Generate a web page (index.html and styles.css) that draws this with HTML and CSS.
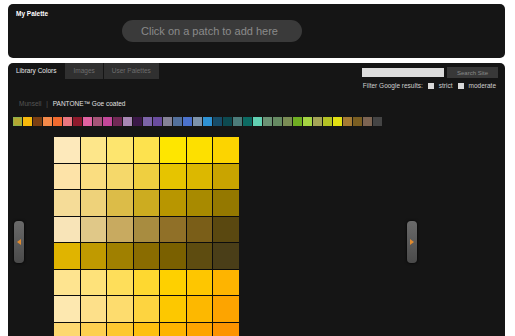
FILE: index.html
```html
<!DOCTYPE html>
<html lang="en">
<head>
    <meta charset="UTF-8">
    <title>Color Library</title>
    <link rel="stylesheet" href="styles.css">
</head>
<body>
    <!-- My palette -->
    <div class="palette-bar">
        <div class="palette-title">My Palette</div>
        <div class="palette-drop">Click on a patch to add here</div>
    </div>

    <!-- Library -->
    <div class="library">
        <div class="library-head">
            <div class="tabs">
                <span class="tab active">Library Colors</span>
                <span class="tab">Images</span>
                <span class="tab">User Palettes</span>
            </div>
            <div class="search">
                <input class="search-input" type="text">
                <button class="search-btn">Search Site</button>
            </div>
        </div>

        <div class="filter">
            <span>Filter Google results:</span>
            <span class="check"></span>
            <span>strict</span>
            <span class="check"></span>
            <span>moderate</span>
        </div>

        <div class="sources">
            <span class="source">Munsell</span>
            <span class="sep">|</span>
            <span class="source active">PANTONE™ Goe coated</span>
        </div>

        <div class="families">
            <span class="family selected" style="background:#b3a732"></span>
            <span class="family" style="background:#f7b90c"></span>
            <span class="family" style="background:#7b3f14"></span>
            <span class="family" style="background:#f58a4a"></span>
            <span class="family" style="background:#f26b2f"></span>
            <span class="family" style="background:#ea7680"></span>
            <span class="family" style="background:#8e1a2c"></span>
            <span class="family" style="background:#e263a3"></span>
            <span class="family" style="background:#a65478"></span>
            <span class="family" style="background:#c4489a"></span>
            <span class="family" style="background:#712955"></span>
            <span class="family" style="background:#a888b4"></span>
            <span class="family" style="background:#3b1848"></span>
            <span class="family" style="background:#7c64a8"></span>
            <span class="family" style="background:#6a4c9e"></span>
            <span class="family" style="background:#858296"></span>
            <span class="family" style="background:#53709c"></span>
            <span class="family" style="background:#4b72cc"></span>
            <span class="family" style="background:#7d93aa"></span>
            <span class="family" style="background:#2e92d4"></span>
            <span class="family" style="background:#174c68"></span>
            <span class="family" style="background:#0d4a50"></span>
            <span class="family" style="background:#4c7c7a"></span>
            <span class="family" style="background:#0c6a62"></span>
            <span class="family" style="background:#62d0b2"></span>
            <span class="family" style="background:#6b9274"></span>
            <span class="family" style="background:#668a62"></span>
            <span class="family" style="background:#7a8c54"></span>
            <span class="family" style="background:#6fae22"></span>
            <span class="family" style="background:#a4d442"></span>
            <span class="family" style="background:#a4a456"></span>
            <span class="family" style="background:#b4c224"></span>
            <span class="family" style="background:#e2e012"></span>
            <span class="family" style="background:#a47a34"></span>
            <span class="family" style="background:#7a5e22"></span>
            <span class="family" style="background:#7c6452"></span>
            <span class="family" style="background:#444444"></span>
        </div>

        <div class="viewer">
            <div class="arrow arrow-left"></div>

            <div class="chips">
                <!-- rząd 1 -->
                <span class="chip" style="background:#fde9bb"></span>
                <span class="chip" style="background:#fde68a"></span>
                <span class="chip" style="background:#fde56e"></span>
                <span class="chip" style="background:#fde24e"></span>
                <span class="chip" style="background:#fee600"></span>
                <span class="chip" style="background:#fde000"></span>
                <span class="chip" style="background:#fcd400"></span>
                <!-- rząd 2 -->
                <span class="chip" style="background:#fde3a8"></span>
                <span class="chip" style="background:#fadd80"></span>
                <span class="chip" style="background:#f5d86a"></span>
                <span class="chip" style="background:#efcf40"></span>
                <span class="chip" style="background:#e6c400"></span>
                <span class="chip" style="background:#dcb800"></span>
                <span class="chip" style="background:#c9a400"></span>
                <!-- rząd 3 -->
                <span class="chip" style="background:#f5dc98"></span>
                <span class="chip" style="background:#eed27a"></span>
                <span class="chip" style="background:#dcbc48"></span>
                <span class="chip" style="background:#ccac20"></span>
                <span class="chip" style="background:#b89600"></span>
                <span class="chip" style="background:#a88a00"></span>
                <span class="chip" style="background:#947800"></span>
                <!-- rząd 4 -->
                <span class="chip" style="background:#f8e4b8"></span>
                <span class="chip" style="background:#e0c888"></span>
                <span class="chip" style="background:#c8aa60"></span>
                <span class="chip" style="background:#a88c40"></span>
                <span class="chip" style="background:#907028"></span>
                <span class="chip" style="background:#7a5e18"></span>
                <span class="chip" style="background:#5a4810"></span>
                <!-- rząd 5 -->
                <span class="chip" style="background:#e0b400"></span>
                <span class="chip" style="background:#c09a00"></span>
                <span class="chip" style="background:#a08000"></span>
                <span class="chip" style="background:#8a6c00"></span>
                <span class="chip" style="background:#7a6000"></span>
                <span class="chip" style="background:#5e4c10"></span>
                <span class="chip" style="background:#4a3e18"></span>
                <!-- rząd 6 -->
                <span class="chip" style="background:#fee490"></span>
                <span class="chip" style="background:#fee27a"></span>
                <span class="chip" style="background:#fede5a"></span>
                <span class="chip" style="background:#fed830"></span>
                <span class="chip" style="background:#fed000"></span>
                <span class="chip" style="background:#fec600"></span>
                <span class="chip" style="background:#feb400"></span>
                <!-- rząd 7 -->
                <span class="chip" style="background:#fde8b0"></span>
                <span class="chip" style="background:#fde08a"></span>
                <span class="chip" style="background:#fddc6e"></span>
                <span class="chip" style="background:#fdd440"></span>
                <span class="chip" style="background:#fdc800"></span>
                <span class="chip" style="background:#fdb800"></span>
                <span class="chip" style="background:#fda400"></span>
                <!-- rząd 8 -->
                <span class="chip" style="background:#fdd870"></span>
                <span class="chip" style="background:#fdd050"></span>
                <span class="chip" style="background:#fdc830"></span>
                <span class="chip" style="background:#fdc010"></span>
                <span class="chip" style="background:#fdb400"></span>
                <span class="chip" style="background:#fda400"></span>
                <span class="chip" style="background:#fc9400"></span>
            </div>

            <div class="arrow arrow-right"></div>
        </div>
    </div>
</body>
</html>
```

FILE: styles.css
```css
html, body {
    height: 100%;
    overflow: hidden;
}

body {
    background: #fff;
    font-family: "Liberation Sans", Arial, sans-serif;
    margin: 0;
    padding: 4px 10px 0 8px;
}

.palette-bar {
    background: #151515;
    border-radius: 5px;
    height: 54px;
    box-sizing: border-box;
    padding: 6px 8px 0 8px;
}

.palette-title {
    color: #fff;
    font-size: 6.5px;
    font-weight: bold;
    line-height: 8px;
}

.palette-drop {
    width: 180px;
    height: 22px;
    box-sizing: border-box;
    margin: 2px 0 0 106px;
    padding-left: 19px;
    background: #3a3a3a;
    border-radius: 11px;
    color: #8a8a8a;
    font-size: 11px;
    line-height: 22px;
}

.library {
    background: #151515;
    border-radius: 5px 5px 0 0;
    margin-top: 5px;
    height: 290px;
}

.library-head {
    display: flex;
    justify-content: space-between;
    align-items: center;
    height: 16px;
}

.tabs {
    display: flex;
    gap: 1px;
    height: 16px;
}

.tab {
    padding: 0 8px;
    background: #303030;
    color: #6e6e6e;
    font-size: 6.5px;
    line-height: 16px;
}

.tab.active {
    background: transparent;
    color: #e8e8e8;
}

.search {
    display: flex;
    align-items: center;
    gap: 3px;
    padding-right: 7px;
    padding-top: 3px;
}

.search-input {
    width: 82px;
    height: 9px;
    box-sizing: border-box;
    border: none;
    padding: 0;
    background: #dcdcdc;
}

.search-btn {
    width: 51px;
    height: 11px;
    border: none;
    padding: 0;
    background: #383838;
    color: #8a8a8a;
    font-family: inherit;
    font-size: 6px;
}

.filter {
    display: flex;
    justify-content: flex-end;
    align-items: center;
    gap: 5px;
    margin-top: 3px;
    padding-right: 9px;
    height: 8px;
    color: #cfcfcf;
    font-size: 6.5px;
    line-height: 8px;
}

.check {
    width: 6px;
    height: 6px;
    background: #d8d8d8;
}

.sources {
    margin-top: 10px;
    padding-left: 11px;
    height: 8px;
    font-size: 6.5px;
    line-height: 8px;
    color: #555;
}

.sep {
    margin: 0 3px;
}

.source.active {
    color: #e0e0e0;
}

.families {
    display: flex;
    gap: 1px;
    margin-top: 9px;
    padding-left: 5px;
    height: 9px;
}

.family {
    width: 9px;
    height: 9px;
    box-sizing: border-box;
}

.family.selected {
    border: 1px solid #8fb04a;
}

.viewer {
    display: flex;
    align-items: flex-start;
    margin-top: 11px;
    padding-left: 6px;
}

.chips {
    display: grid;
    grid-template-columns: repeat(7, 25.5px);
    grid-auto-rows: 25.5px;
    gap: 1px;
    margin-left: 30px;
    background: #0c0c0c;
}

.arrow {
    width: 10px;
    height: 42px;
    margin-top: 84px;
    border-radius: 4px;
    background: linear-gradient(#6a6a6a, #4a4a4a);
    box-shadow: 0 0 3px #000;
    display: flex;
    align-items: center;
    justify-content: center;
}

.arrow::after {
    content: "";
    width: 0;
    height: 0;
    border-top: 3px solid transparent;
    border-bottom: 3px solid transparent;
}

.arrow-left::after {
    border-right: 4px solid #e08a2e;
}

.arrow-right {
    margin-left: 168px;
}

.arrow-right::after {
    border-left: 4px solid #e08a2e;
}
```
